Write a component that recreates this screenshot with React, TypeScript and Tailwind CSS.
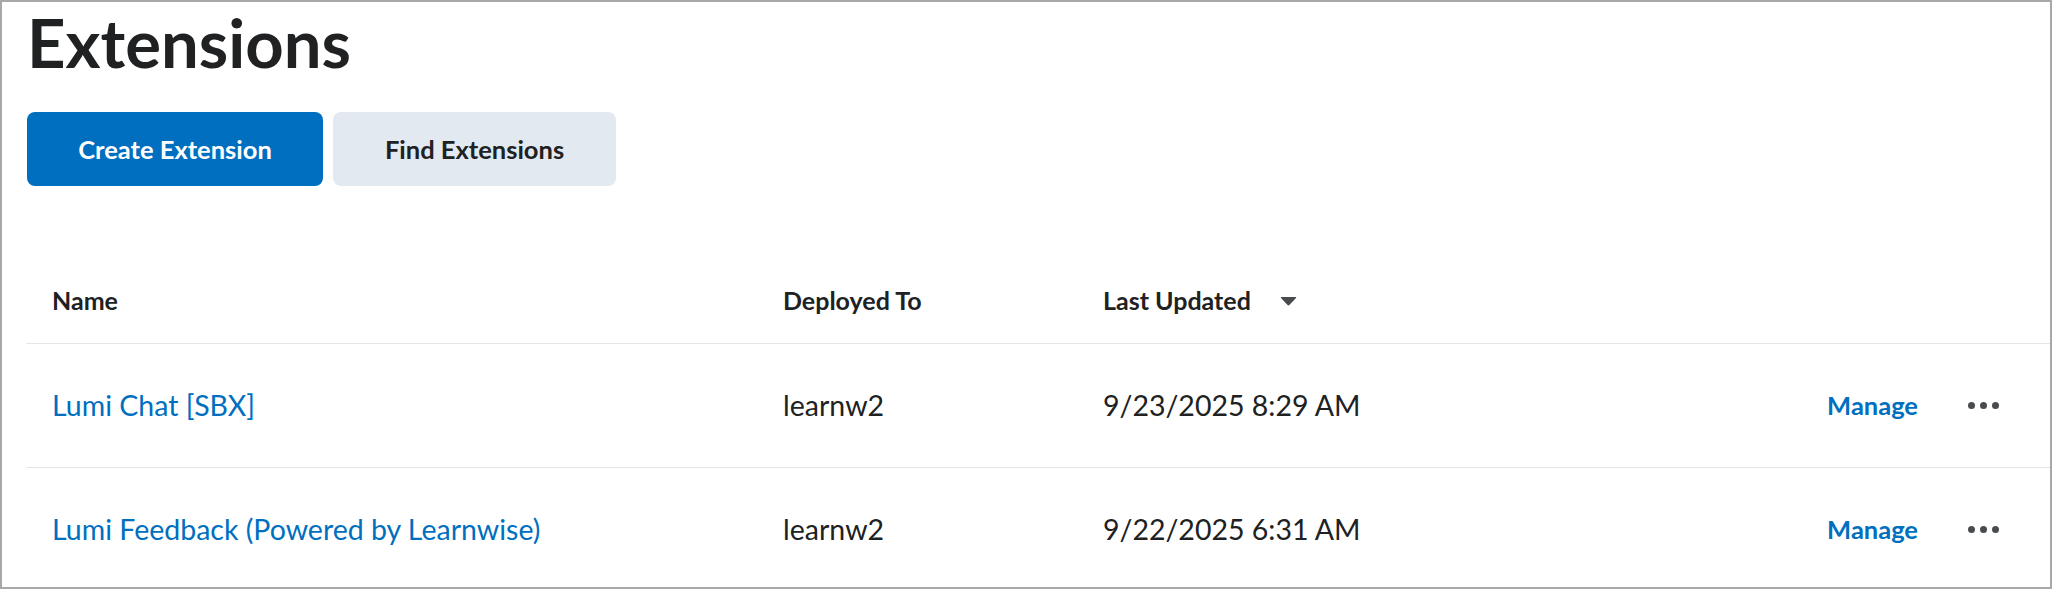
import React from 'react';

type Extension = {
  name: string;
  deployedTo: string;
  lastUpdated: string;
};

const extensions: Extension[] = [
  { name: 'Lumi Chat [SBX]', deployedTo: 'learnw2', lastUpdated: '9/23/2025 8:29 AM' },
  { name: 'Lumi Feedback (Powered by Learnwise)', deployedTo: 'learnw2', lastUpdated: '9/22/2025 6:31 AM' },
];

const cols = 'grid grid-cols-[731px_320px_1fr_auto_48px_43px] items-center';

const SortArrow = () => (
  <svg width="17" height="10" viewBox="0 0 17 10" className="ml-[29px]">
    <path d="M1.5 1 H15.5 Q16.8 1 16 2.1 L9.4 9 Q8.5 9.9 7.6 9 L1 2.1 Q0.2 1 1.5 1 Z" fill="#494c4e" />
  </svg>
);

const MoreDots = () => (
  <button type="button" className="flex items-center justify-center gap-[5px] h-[40px] w-[48px]">
    <span className="block w-[7px] h-[7px] rounded-full bg-[#494c4e]" />
    <span className="block w-[7px] h-[7px] rounded-full bg-[#494c4e]" />
    <span className="block w-[7px] h-[7px] rounded-full bg-[#494c4e]" />
  </button>
);

export default function App() {
  return (
    <div className="w-[2052px] h-[589px] overflow-hidden bg-white border-2 border-[#a8a8a8] font-[Lato,sans-serif] text-[#202122]">
      <div className="pl-[25px] pt-[7px]">
        <h1 className="text-[67px] leading-none font-bold">Extensions</h1>

        <div className="flex gap-[10px] mt-[36px]">
          <button
            type="button"
            className="w-[296px] h-[74px] rounded-[8px] bg-[#006fbf] text-white text-[25.5px] font-bold"
          >
            Create Extension
          </button>
          <button
            type="button"
            className="w-[283px] h-[74px] rounded-[8px] bg-[#e3e9f1] text-[#202122] text-[25.5px] font-bold"
          >
            Find Extensions
          </button>
        </div>
      </div>

      <div className="ml-[24px] mt-[72px]">
        {/* header */}
        <div className={`${cols} h-[86px] border-b border-[#e3e6ea] text-[25px] font-bold leading-none`}>
          <div className="pl-[26px]">Name</div>
          <div className="pl-[26px]">Deployed To</div>
          <div className="pl-[26px] flex items-center">
            Last Updated
            <SortArrow />
          </div>
          <div />
          <div />
          <div />
        </div>

        {extensions.map((ext) => (
          <div
            key={ext.name}
            className={`${cols} h-[124px] border-b border-[#e3e6ea] text-[28.5px] leading-none`}
          >
            <div className="pl-[26px]">
              <a href="#" className="text-[#006fbf]">
                {ext.name}
              </a>
            </div>
            <div className="pl-[26px]">{ext.deployedTo}</div>
            <div className="pl-[26px]">{ext.lastUpdated}</div>
            <a href="#" className="text-[#006fbf] text-[25.5px] font-bold mr-[41px]">
              Manage
            </a>
            <MoreDots />
            <div />
          </div>
        ))}
      </div>
    </div>
  );
}
